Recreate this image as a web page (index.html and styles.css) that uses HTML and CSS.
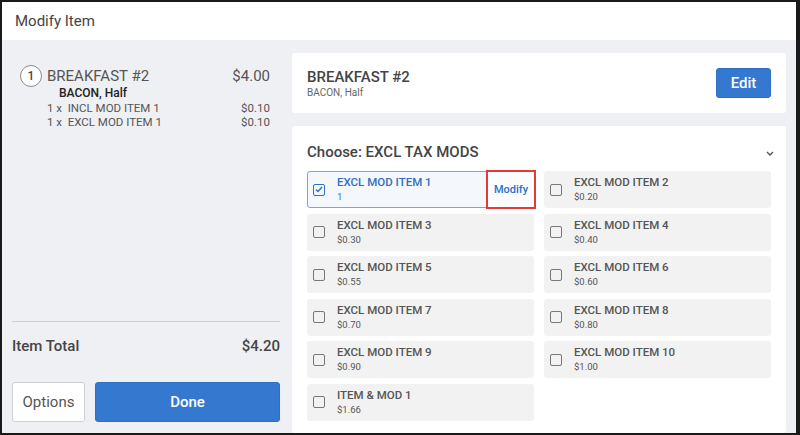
FILE: index.html
```html
<!DOCTYPE html>
<html lang="en">
<head>
    <meta charset="UTF-8">
    <meta name="viewport" content="width=device-width, initial-scale=1.0">
    <title>Modify Item</title>
    <link rel="stylesheet" href="styles.css">
</head>
<body>
    <div class="frame">
        <div class="header">Modify Item</div>

        <div class="main">
            <!-- order summary -->
            <div class="summary">
                <div class="order">
                    <div class="order-row">
                        <span class="qty">1</span>
                        <span class="order-name">BREAKFAST #2</span>
                        <span class="order-price">$4.00</span>
                    </div>
                    <div class="order-sub">BACON, Half</div>
                    <div class="mod-line"><span>1 x&nbsp; INCL MOD ITEM 1</span><span>$0.10</span></div>
                    <div class="mod-line"><span>1 x&nbsp; EXCL MOD ITEM 1</span><span>$0.10</span></div>
                </div>

                <div class="summary-footer">
                    <div class="total-row">
                        <span>Item Total</span>
                        <span>$4.20</span>
                    </div>
                    <div class="actions">
                        <button class="btn btn-options">Options</button>
                        <button class="btn btn-done">Done</button>
                    </div>
                </div>
            </div>

            <!-- modifier picker -->
            <div class="picker">
                <div class="card item-card">
                    <div>
                        <div class="item-title">BREAKFAST #2</div>
                        <div class="item-sub">BACON, Half</div>
                    </div>
                    <button class="btn btn-edit">Edit</button>
                </div>

                <div class="card group-card">
                    <div class="group-head">
                        <span>Choose: EXCL TAX MODS</span>
                        <svg class="chevron" width="8" height="5" viewBox="0 0 8 5">
                            <path d="M1 1 L4 4 L7 1" fill="none" stroke="#555" stroke-width="1.4"/>
                        </svg>
                    </div>

                    <div class="mod-grid">
                        <div class="mod selected">
                            <span class="check">
                                <svg width="8" height="7" viewBox="0 0 8 7">
                                    <path d="M1 3.5 L3 5.5 L7 1" fill="none" stroke="#2f6fc4" stroke-width="1.4"/>
                                </svg>
                            </span>
                            <div class="mod-text">
                                <div class="mod-name">EXCL MOD ITEM 1</div>
                                <div class="mod-price">1</div>
                            </div>
                            <span class="modify-link">Modify</span>
                        </div>
                        <div class="mod">
                            <span class="check"></span>
                            <div class="mod-text">
                                <div class="mod-name">EXCL MOD ITEM 2</div>
                                <div class="mod-price">$0.20</div>
                            </div>
                        </div>
                        <div class="mod">
                            <span class="check"></span>
                            <div class="mod-text">
                                <div class="mod-name">EXCL MOD ITEM 3</div>
                                <div class="mod-price">$0.30</div>
                            </div>
                        </div>
                        <div class="mod">
                            <span class="check"></span>
                            <div class="mod-text">
                                <div class="mod-name">EXCL MOD ITEM 4</div>
                                <div class="mod-price">$0.40</div>
                            </div>
                        </div>
                        <div class="mod">
                            <span class="check"></span>
                            <div class="mod-text">
                                <div class="mod-name">EXCL MOD ITEM 5</div>
                                <div class="mod-price">$0.55</div>
                            </div>
                        </div>
                        <div class="mod">
                            <span class="check"></span>
                            <div class="mod-text">
                                <div class="mod-name">EXCL MOD ITEM 6</div>
                                <div class="mod-price">$0.60</div>
                            </div>
                        </div>
                        <div class="mod">
                            <span class="check"></span>
                            <div class="mod-text">
                                <div class="mod-name">EXCL MOD ITEM 7</div>
                                <div class="mod-price">$0.70</div>
                            </div>
                        </div>
                        <div class="mod">
                            <span class="check"></span>
                            <div class="mod-text">
                                <div class="mod-name">EXCL MOD ITEM 8</div>
                                <div class="mod-price">$0.80</div>
                            </div>
                        </div>
                        <div class="mod">
                            <span class="check"></span>
                            <div class="mod-text">
                                <div class="mod-name">EXCL MOD ITEM 9</div>
                                <div class="mod-price">$0.90</div>
                            </div>
                        </div>
                        <div class="mod">
                            <span class="check"></span>
                            <div class="mod-text">
                                <div class="mod-name">EXCL MOD ITEM 10</div>
                                <div class="mod-price">$1.00</div>
                            </div>
                        </div>
                        <div class="mod">
                            <span class="check"></span>
                            <div class="mod-text">
                                <div class="mod-name">ITEM &amp; MOD 1</div>
                                <div class="mod-price">$1.66</div>
                            </div>
                        </div>
                    </div>
                </div>
            </div>
        </div>
    </div>
</body>
</html>
```

FILE: styles.css
```css
* {
    margin: 0;
    padding: 0;
    box-sizing: border-box;
    font-family: Roboto, 'Liberation Sans', sans-serif;
}

body {
    width: 800px;
    height: 435px;
    overflow: hidden;
}

.frame {
    width: 800px;
    height: 435px;
    border: 2px solid #1a1a1a;
    border-right-width: 4px;
    display: flex;
    flex-direction: column;
    background-color: #eff0f4;
}

.header {
    height: 38px;
    flex-shrink: 0;
    background-color: white;
    color: #444;
    font-size: 15px;
    line-height: 38px;
    padding-left: 13px;
}

.main {
    flex: 1;
    display: flex;
    min-height: 0;
}

/* left column */
.summary {
    width: 288px;
    flex-shrink: 0;
    padding: 25px 10px 11px 10px;
    display: flex;
    flex-direction: column;
    justify-content: space-between;
}

.order {
    padding: 0 10px 0 8px;
    color: #555;
}

.order-row {
    display: flex;
    align-items: center;
    height: 22px;
}

.qty {
    width: 22px;
    height: 22px;
    border: 1px solid #8a8a8a;
    border-radius: 50%;
    background-color: white;
    font-size: 12px;
    font-weight: 500;
    color: #444;
    display: flex;
    align-items: center;
    justify-content: center;
    margin-right: 5px;
}

.order-name {
    flex: 1;
    font-size: 15px;
    color: #555;
}

.order-price {
    font-size: 15px;
    color: #555;
}

.order-sub {
    font-size: 12px;
    font-weight: 500;
    color: #222;
    margin: -1px 0 1px 39px;
    line-height: 14px;
}

.mod-line {
    display: flex;
    justify-content: space-between;
    font-size: 11.5px;
    line-height: 14px;
    padding-left: 27px;
    color: #555;
}

.summary-footer {
    border-top: 1px solid #cfd0d4;
    padding-top: 15px;
}

.total-row {
    display: flex;
    justify-content: space-between;
    font-size: 15px;
    font-weight: 500;
    color: #444;
    line-height: 18px;
    margin-bottom: 27px;
}

.actions {
    display: flex;
    gap: 10px;
}

.btn {
    height: 40px;
    border-radius: 3px;
    font-size: 15px;
    cursor: pointer;
}

.btn-options {
    width: 73px;
    background-color: white;
    border: 1px solid #cfd0d4;
    color: #555;
}

.btn-done {
    flex: 1;
    background-color: #3479cf;
    border: 1px solid #2f6fc0;
    color: white;
    font-weight: 500;
}

/* right column */
.picker {
    flex: 1;
    padding: 13px 10px 0 2px;
    display: flex;
    flex-direction: column;
    gap: 13px;
    min-height: 0;
}

.card {
    background-color: white;
    border-radius: 3px;
}

.item-card {
    height: 60px;
    display: flex;
    align-items: center;
    justify-content: space-between;
    padding: 0 15px;
}

.item-title {
    font-size: 15px;
    font-weight: 500;
    color: #444;
    line-height: 20px;
    margin-top: -1px;
}

.item-sub {
    font-size: 10px;
    color: #666;
    line-height: 12px;
}

.btn-edit {
    width: 55px;
    height: 30px;
    background-color: #3479cf;
    border: 1px solid #2f6fc0;
    color: white;
    font-weight: 500;
    font-size: 15px;
}

.group-card {
    flex: 1;
    padding: 16px 15px 0 15px;
    overflow: hidden;
}

.group-head {
    display: flex;
    justify-content: space-between;
    align-items: center;
    font-size: 15px;
    font-weight: 500;
    color: #444;
    line-height: 20px;
    margin-bottom: 9px;
}

.chevron {
    margin-right: -3px;
    margin-top: 2px;
}

.mod-grid {
    display: grid;
    grid-template-columns: 1fr 1fr;
    column-gap: 10px;
    row-gap: 5.5px;
}

.mod {
    position: relative;
    height: 37px;
    background-color: #f2f2f2;
    border-radius: 3px;
    display: flex;
    align-items: center;
    padding-left: 6px;
    color: #555;
}

.check {
    width: 12px;
    height: 12px;
    border: 1.5px solid #777;
    border-radius: 2px;
    margin-right: 12px;
    flex-shrink: 0;
    display: flex;
    align-items: center;
    justify-content: center;
}

.mod-text {
    flex: 1;
    margin-top: -1px;
}

.mod-name {
    font-size: 11.5px;
    font-weight: 500;
    line-height: 14px;
}

.mod-price {
    font-size: 9.5px;
    line-height: 13px;
    margin-top: 1px;
}

.mod.selected {
    background-color: #f4f7fc;
    border: 1px solid #7aa3df;
    padding-left: 5px;
    color: #2f6fc4;
}

.mod.selected .check {
    border-color: #2f6fc4;
}

/* highlight frame drawn over the modify link */
.modify-link {
    position: absolute;
    top: -2px;
    right: -3px;
    bottom: -2px;
    width: 50px;
    border: 2px solid #e53935;
    background-color: #fafcff;
    font-size: 11px;
    font-weight: 500;
    color: #2f6fc4;
    display: flex;
    align-items: center;
    justify-content: center;
}
```
